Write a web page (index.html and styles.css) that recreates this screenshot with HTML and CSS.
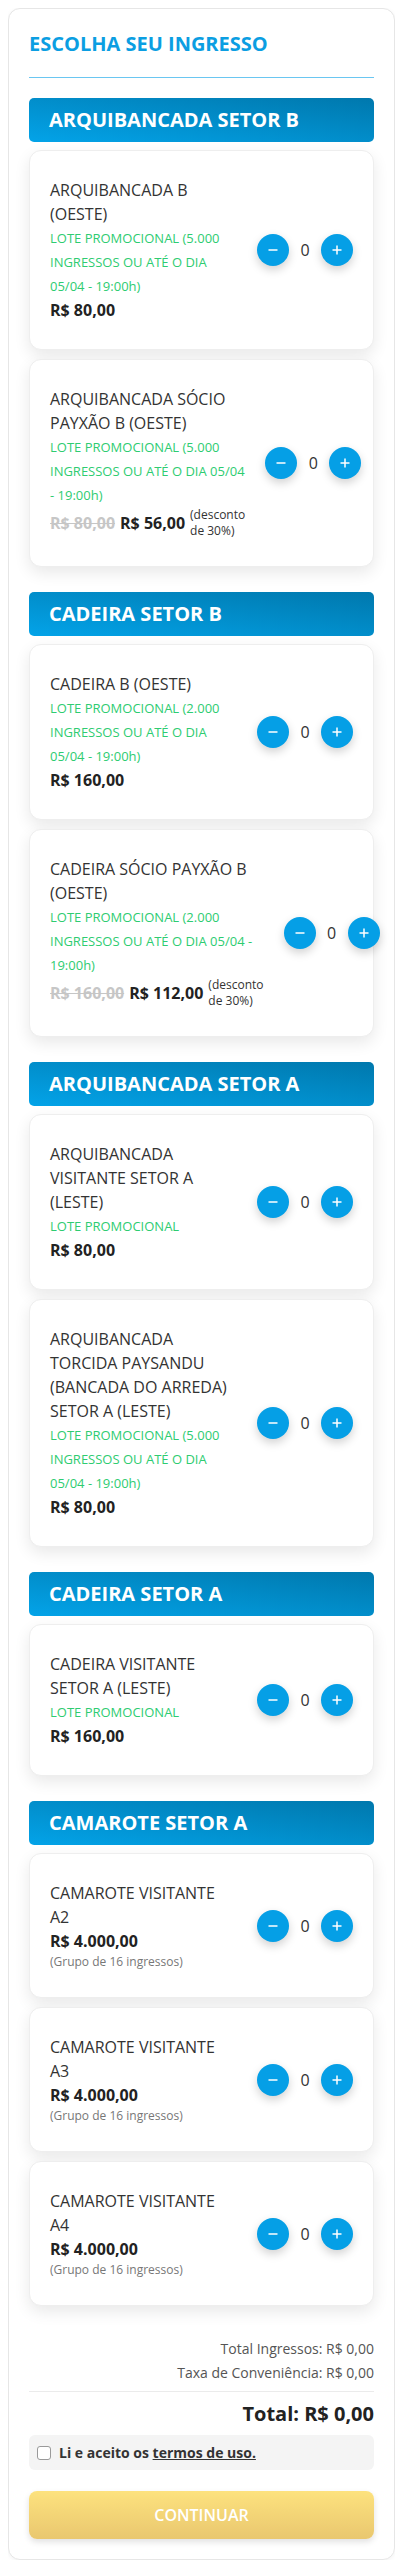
FILE: index.html
```html
<!DOCTYPE html>
<html lang="pt-BR">
<head>
<meta charset="utf-8">
<title>Escolha seu ingresso</title>
<link rel="stylesheet" href="styles.css">
</head>
<body>
<main class="panel">
  <h1 class="title">ESCOLHA SEU INGRESSO</h1>
  <hr class="rule">

  <section class="section">
    <h2 class="section-title">ARQUIBANCADA SETOR B</h2>
    <div class="card">
      <div class="info">
        <div class="name">ARQUIBANCADA B (OESTE)</div>
        <div class="lote">LOTE PROMOCIONAL (5.000 INGRESSOS OU ATÉ O DIA 05/04 - 19:00h)</div>
        <div class="price">R$ 80,00</div>
      </div>
      <div class="controls">
        <button class="btn"><svg width="12" height="12" viewBox="0 0 12 12"><path d="M1.5 6h9" stroke="#fff" stroke-width="1.5"/></svg></button>
        <span class="count">0</span>
        <button class="btn"><svg width="12" height="12" viewBox="0 0 12 12"><path d="M1.5 6h9M6 1.5v9" stroke="#fff" stroke-width="1.5"/></svg></button>
      </div>
    </div>
    <div class="card">
      <div class="info">
        <div class="name">ARQUIBANCADA SÓCIO PAYXÃO B (OESTE)</div>
        <div class="lote">LOTE PROMOCIONAL (5.000 INGRESSOS OU ATÉ O DIA 05/04 - 19:00h)</div>
        <div class="price-row">
          <span class="old">R$ 80,00</span>
          <span class="price">R$ 56,00</span>
          <span class="discount">(desconto de 30%)</span>
        </div>
      </div>
      <div class="controls">
        <button class="btn"><svg width="12" height="12" viewBox="0 0 12 12"><path d="M1.5 6h9" stroke="#fff" stroke-width="1.5"/></svg></button>
        <span class="count">0</span>
        <button class="btn"><svg width="12" height="12" viewBox="0 0 12 12"><path d="M1.5 6h9M6 1.5v9" stroke="#fff" stroke-width="1.5"/></svg></button>
      </div>
    </div>
  </section>

  <section class="section">
    <h2 class="section-title">CADEIRA SETOR B</h2>
    <div class="card">
      <div class="info">
        <div class="name">CADEIRA B (OESTE)</div>
        <div class="lote">LOTE PROMOCIONAL (2.000 INGRESSOS OU ATÉ O DIA 05/04 - 19:00h)</div>
        <div class="price">R$ 160,00</div>
      </div>
      <div class="controls">
        <button class="btn"><svg width="12" height="12" viewBox="0 0 12 12"><path d="M1.5 6h9" stroke="#fff" stroke-width="1.5"/></svg></button>
        <span class="count">0</span>
        <button class="btn"><svg width="12" height="12" viewBox="0 0 12 12"><path d="M1.5 6h9M6 1.5v9" stroke="#fff" stroke-width="1.5"/></svg></button>
      </div>
    </div>
    <div class="card">
      <div class="info">
        <div class="name">CADEIRA SÓCIO PAYXÃO B (OESTE)</div>
        <div class="lote">LOTE PROMOCIONAL (2.000 INGRESSOS OU ATÉ O DIA 05/04 - 19:00h)</div>
        <div class="price-row">
          <span class="old">R$ 160,00</span>
          <span class="price">R$ 112,00</span>
          <span class="discount">(desconto de 30%)</span>
        </div>
      </div>
      <div class="controls">
        <button class="btn"><svg width="12" height="12" viewBox="0 0 12 12"><path d="M1.5 6h9" stroke="#fff" stroke-width="1.5"/></svg></button>
        <span class="count">0</span>
        <button class="btn"><svg width="12" height="12" viewBox="0 0 12 12"><path d="M1.5 6h9M6 1.5v9" stroke="#fff" stroke-width="1.5"/></svg></button>
      </div>
    </div>
  </section>

  <section class="section">
    <h2 class="section-title">ARQUIBANCADA SETOR A</h2>
    <div class="card">
      <div class="info">
        <div class="name">ARQUIBANCADA VISITANTE SETOR A (LESTE)</div>
        <div class="lote">LOTE PROMOCIONAL</div>
        <div class="price">R$ 80,00</div>
      </div>
      <div class="controls">
        <button class="btn"><svg width="12" height="12" viewBox="0 0 12 12"><path d="M1.5 6h9" stroke="#fff" stroke-width="1.5"/></svg></button>
        <span class="count">0</span>
        <button class="btn"><svg width="12" height="12" viewBox="0 0 12 12"><path d="M1.5 6h9M6 1.5v9" stroke="#fff" stroke-width="1.5"/></svg></button>
      </div>
    </div>
    <div class="card">
      <div class="info">
        <div class="name">ARQUIBANCADA TORCIDA PAYSANDU (BANCADA DO ARREDA) SETOR A (LESTE)</div>
        <div class="lote">LOTE PROMOCIONAL (5.000 INGRESSOS OU ATÉ O DIA 05/04 - 19:00h)</div>
        <div class="price">R$ 80,00</div>
      </div>
      <div class="controls">
        <button class="btn"><svg width="12" height="12" viewBox="0 0 12 12"><path d="M1.5 6h9" stroke="#fff" stroke-width="1.5"/></svg></button>
        <span class="count">0</span>
        <button class="btn"><svg width="12" height="12" viewBox="0 0 12 12"><path d="M1.5 6h9M6 1.5v9" stroke="#fff" stroke-width="1.5"/></svg></button>
      </div>
    </div>
  </section>

  <section class="section">
    <h2 class="section-title">CADEIRA SETOR A</h2>
    <div class="card">
      <div class="info">
        <div class="name">CADEIRA VISITANTE SETOR A (LESTE)</div>
        <div class="lote">LOTE PROMOCIONAL</div>
        <div class="price">R$ 160,00</div>
      </div>
      <div class="controls">
        <button class="btn"><svg width="12" height="12" viewBox="0 0 12 12"><path d="M1.5 6h9" stroke="#fff" stroke-width="1.5"/></svg></button>
        <span class="count">0</span>
        <button class="btn"><svg width="12" height="12" viewBox="0 0 12 12"><path d="M1.5 6h9M6 1.5v9" stroke="#fff" stroke-width="1.5"/></svg></button>
      </div>
    </div>
  </section>

  <section class="section">
    <h2 class="section-title">CAMAROTE SETOR A</h2>
    <div class="card">
      <div class="info">
        <div class="name">CAMAROTE VISITANTE A2</div>
        <div class="price">R$ 4.000,00</div>
        <div class="group">(Grupo de 16 ingressos)</div>
      </div>
      <div class="controls">
        <button class="btn"><svg width="12" height="12" viewBox="0 0 12 12"><path d="M1.5 6h9" stroke="#fff" stroke-width="1.5"/></svg></button>
        <span class="count">0</span>
        <button class="btn"><svg width="12" height="12" viewBox="0 0 12 12"><path d="M1.5 6h9M6 1.5v9" stroke="#fff" stroke-width="1.5"/></svg></button>
      </div>
    </div>
    <div class="card">
      <div class="info">
        <div class="name">CAMAROTE VISITANTE A3</div>
        <div class="price">R$ 4.000,00</div>
        <div class="group">(Grupo de 16 ingressos)</div>
      </div>
      <div class="controls">
        <button class="btn"><svg width="12" height="12" viewBox="0 0 12 12"><path d="M1.5 6h9" stroke="#fff" stroke-width="1.5"/></svg></button>
        <span class="count">0</span>
        <button class="btn"><svg width="12" height="12" viewBox="0 0 12 12"><path d="M1.5 6h9M6 1.5v9" stroke="#fff" stroke-width="1.5"/></svg></button>
      </div>
    </div>
    <div class="card">
      <div class="info">
        <div class="name">CAMAROTE VISITANTE A4</div>
        <div class="price">R$ 4.000,00</div>
        <div class="group">(Grupo de 16 ingressos)</div>
      </div>
      <div class="controls">
        <button class="btn"><svg width="12" height="12" viewBox="0 0 12 12"><path d="M1.5 6h9" stroke="#fff" stroke-width="1.5"/></svg></button>
        <span class="count">0</span>
        <button class="btn"><svg width="12" height="12" viewBox="0 0 12 12"><path d="M1.5 6h9M6 1.5v9" stroke="#fff" stroke-width="1.5"/></svg></button>
      </div>
    </div>
  </section>

  <div class="summary">
    <p class="summary-line">Total Ingressos: R$ 0,00</p>
    <p class="summary-line">Taxa de Conveniência: R$ 0,00</p>
    <hr class="divider">
    <p class="total">Total: R$ 0,00</p>
  </div>

  <label class="terms">
    <input type="checkbox" class="checkbox">
    <span>Li e aceito os <a href="#" class="terms-link">termos de uso.</a></span>
  </label>

  <button class="continue">CONTINUAR</button>
</main>
</body>
</html>
```

FILE: styles.css
```css
* {
  box-sizing: border-box;
}

body {
  margin: 8px;
  font-family: "Open Sans", "Liberation Sans", sans-serif;
  color: #333;
  background: #fff;
}

.panel {
  border: 1px solid #e6e6e6;
  border-radius: 12px;
  padding: 21px 20px 20px;
  background: #fff;
  box-shadow: 0 1px 4px rgba(0, 0, 0, 0.05);
}

.title {
  margin: 0;
  font-size: 20px;
  font-weight: 700;
  line-height: normal;
  color: #0b9ee2;
}

.rule {
  border: 0;
  border-top: 1px solid #6ac6f1;
  margin: 20px 0;
}

.section {
  margin-bottom: 25px;
}

.section-title {
  margin: 0 0 8px;
  height: 44px;
  line-height: 44px;
  padding: 0 20px;
  border-radius: 5px;
  font-size: 20px;
  font-weight: 700;
  color: #fff;
  background: linear-gradient(to top right, #03a3e8, #0078ad);
}

.card {
  display: flex;
  align-items: center;
  gap: 20px;
  padding: 27px 20px;
  border: 1px solid #eeeeee;
  border-radius: 12px;
  background: #fff;
  box-shadow: 0 6px 16px rgba(0, 0, 0, 0.09);
}

.card + .card {
  margin-top: 9px;
}

.info {
  flex: 1 1 0;
}

.name {
  font-size: 16px;
  line-height: 24px;
  color: #333;
}

.lote {
  font-size: 13px;
  line-height: 24px;
  color: #2ecc71;
}

.price {
  font-size: 16px;
  line-height: 24px;
  font-weight: 700;
  color: #222;
  white-space: nowrap;
}

.price-row {
  display: flex;
  align-items: center;
  gap: 5px;
}

.old {
  font-size: 16px;
  line-height: 24px;
  font-weight: 700;
  color: #c6c6c6;
  text-decoration: line-through;
  white-space: nowrap;
}

.discount {
  font-size: 12px;
  line-height: 16px;
  color: #333;
}

.group {
  font-size: 12px;
  line-height: 17px;
  color: #777;
}

.controls {
  display: flex;
  align-items: center;
  flex-shrink: 0;
}

.btn {
  width: 32px;
  height: 32px;
  padding: 0;
  border: 0;
  border-radius: 50%;
  background: #059fe6;
  display: flex;
  align-items: center;
  justify-content: center;
  box-shadow: 0 4px 10px rgba(0, 0, 0, 0.18);
}

.count {
  width: 32px;
  text-align: center;
  font-size: 16px;
  color: #333;
}

.summary {
  padding-top: 6px;
  text-align: right;
}

.summary-line {
  margin: 0;
  font-size: 14px;
  line-height: 24px;
  color: #555;
}

.divider {
  border: 0;
  border-top: 1px solid #ebebeb;
  margin: 6px 0 8px;
}

.total {
  margin: 0;
  font-size: 20px;
  line-height: 28px;
  font-weight: 700;
  color: #222;
}

.terms {
  margin-top: 7px;
  height: 35px;
  display: flex;
  align-items: center;
  gap: 8px;
  padding: 0 8px;
  border-radius: 6px;
  background: #f4f4f4;
  font-size: 14px;
  font-weight: 700;
  color: #333;
}

.checkbox {
  appearance: none;
  -webkit-appearance: none;
  margin: 0;
  width: 14px;
  height: 14px;
  border: 1px solid #9a9a9a;
  border-radius: 3px;
  background: #fff;
}

.terms-link {
  color: #333;
  text-decoration: underline;
}

.continue {
  display: block;
  margin-top: 21px;
  width: 100%;
  height: 48px;
  border: 0;
  border-radius: 8px;
  background: linear-gradient(#fde27e, #e9c76f);
  color: #fff;
  font-family: inherit;
  font-size: 16px;
  font-weight: 600;
  box-shadow: 0 3px 6px rgba(0, 0, 0, 0.12);
}
```
